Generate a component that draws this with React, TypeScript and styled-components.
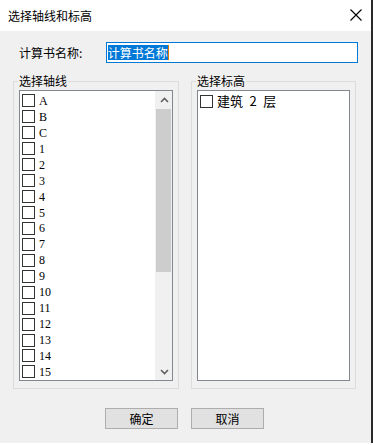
import React from "react";
import styled, { createGlobalStyle } from "styled-components";

const Global = createGlobalStyle`
  html, body { margin: 0; padding: 0; background: #ffffff; }
  body { font-family: "Noto Sans CJK SC", "Noto Sans", sans-serif; font-size: 12px; color: #000; }
  * { box-sizing: border-box; }
`;

const Window = styled.div`
  width: 373px;
  height: 443px;
  display: flex;
  flex-direction: column;
  border-right: 2px solid #2a2a2a;
`;

const TitleBar = styled.div`
  height: 31px;
  background: #ffffff;
  display: flex;
  align-items: center;
  justify-content: space-between;
  padding: 0 8px 1px 8px;
  font-size: 12px;
  flex: none;
`;

const Close = styled.div`
  width: 12px;
  height: 12px;
  margin-right: 1px;
  display: flex;
`;

const Body = styled.div`
  flex: 1;
  background: #f0f0f0;
  display: flex;
  flex-direction: column;
  padding: 11px 13px 0 13px;
`;

const NameRow = styled.div`
  display: flex;
  align-items: center;
  height: 21px;
`;

const Label = styled.div`
  width: 93px;
  padding-left: 6px;
  font-size: 12px;
  line-height: 16px;
`;

const TextBox = styled.div`
  width: 253px;
  height: 21px;
  border: 1px solid #0078d7;
  background: #fff;
  display: flex;
  align-items: center;
  padding-left: 1px;
`;

const Selected = styled.span`
  background: #0078d7;
  color: #fff;
  font-size: 12px;
  line-height: 15px;
  height: 15px;
  display: inline-block;
  border-right: 1px solid #d87a00;
`;

const Groups = styled.div`
  display: flex;
  gap: 12px;
  margin-top: 10px;
`;

const Group = styled.fieldset<{ $w: number }>`
  width: ${(p) => p.$w}px;
  height: 316px;
  margin: 0;
  border: 1px solid #dcdcdc;
  padding: 0 5px 7px 5px;
  display: flex;
  flex-direction: column;
  min-width: 0;
`;

const Legend = styled.legend`
  padding: 0 1px;
  margin-left: -1px;
  font-size: 12px;
  line-height: 16px;
`;

const ListBox = styled.div`
  margin-top: 1px;
  flex: 1;
  border: 1px solid #828790;
  background: #fff;
  display: flex;
  overflow: hidden;
`;

const Items = styled.div`
  flex: 1;
  display: flex;
  flex-direction: column;
  padding: 2px 0 0 2px;
`;

const Row = styled.div`
  height: 16px;
  display: flex;
  align-items: center;
  gap: 4px;
`;

const Box = styled.span`
  width: 13px;
  height: 13px;
  border: 1px solid #333333;
  background: #fff;
  flex: none;
`;

const ItemText = styled.span<{ $cjk?: boolean }>`
  font-family: ${(p) =>
    p.$cjk ? `"Noto Sans CJK SC", sans-serif` : `"Liberation Serif", serif`};
  font-size: ${(p) => (p.$cjk ? 13 : 12)}px;
  line-height: 14px;
  white-space: pre;
`;

const ScrollBar = styled.div`
  width: 17px;
  background: #f0f0f0;
  display: flex;
  flex-direction: column;
  border-left: 1px solid #f0f0f0;
`;

const Arrow = styled.div`
  height: 17px;
  display: flex;
  align-items: center;
  justify-content: center;
  flex: none;
`;

const Thumb = styled.div`
  height: 163px;
  margin: 1px 1px 0 0;
  background: #cdcdcd;
  flex: none;
`;

const Track = styled.div`
  flex: 1;
`;

const Buttons = styled.div`
  display: flex;
  justify-content: center;
  gap: 13px;
  margin-top: 19px;
  padding-right: 2px;
`;

const Button = styled.div`
  width: 73px;
  height: 21px;
  border: 1px solid #adadad;
  background: #e1e1e1;
  display: flex;
  align-items: center;
  justify-content: center;
  font-size: 12px;
`;

const axes = ["A", "B", "C", "1", "2", "3", "4", "5", "6", "7", "8", "9", "10", "11", "12", "13", "14", "15"];

const Chevron = ({ up }: { up?: boolean }) => (
  <svg width="9" height="6" viewBox="0 0 9 6">
    <path
      d={up ? "M1 5 L4.5 1.5 L8 5" : "M1 1 L4.5 4.5 L8 1"}
      fill="none"
      stroke="#606060"
      strokeWidth="1.6"
    />
  </svg>
);

export default function App() {
  return (
    <>
      <Global />
      <Window>
        <TitleBar>
          <span>选择轴线和标高</span>
          <Close>
            <svg width="12" height="12" viewBox="0 0 12 12">
              <path d="M0.5 0.5 L11.5 11.5 M11.5 0.5 L0.5 11.5" stroke="#000" strokeWidth="1.1" />
            </svg>
          </Close>
        </TitleBar>
        <Body>
          <NameRow>
            <Label>计算书名称:</Label>
            <TextBox>
              <Selected>计算书名称</Selected>
            </TextBox>
          </NameRow>
          <Groups>
            <Group $w={166}>
              <Legend>选择轴线</Legend>
              <ListBox>
                <Items>
                  {axes.map((a) => (
                    <Row key={a}>
                      <Box />
                      <ItemText>{a}</ItemText>
                    </Row>
                  ))}
                </Items>
                <ScrollBar>
                  <Arrow>
                    <Chevron up />
                  </Arrow>
                  <Thumb />
                  <Track />
                  <Arrow>
                    <Chevron />
                  </Arrow>
                </ScrollBar>
              </ListBox>
            </Group>
            <Group $w={165}>
              <Legend>选择标高</Legend>
              <ListBox>
                <Items>
                  <Row>
                    <Box />
                    <ItemText $cjk>{"建筑\u20022\u2002层"}</ItemText>
                  </Row>
                </Items>
              </ListBox>
            </Group>
          </Groups>
          <Buttons>
            <Button>确定</Button>
            <Button>取消</Button>
          </Buttons>
        </Body>
      </Window>
    </>
  );
}
